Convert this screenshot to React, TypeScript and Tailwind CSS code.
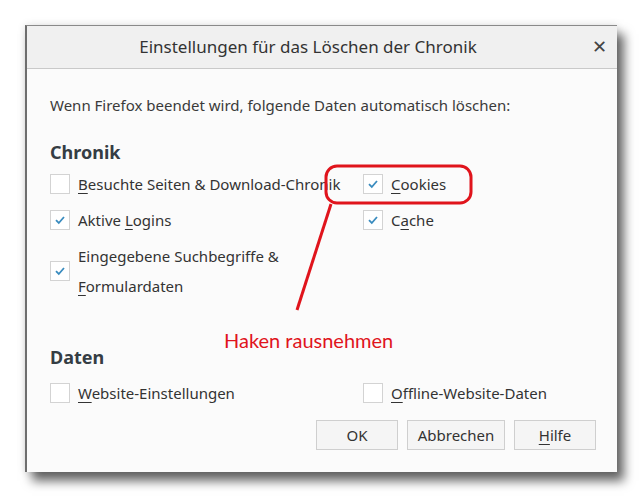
import React from "react";

type Item = { label: string; key: number; checked: boolean };

const Check = ({ checked }: { checked: boolean }) => (
  <span className="flex h-[20px] w-[20px] shrink-0 items-center justify-center border border-[#d3d3d3] bg-white">
    {checked && (
      <svg width="12" height="12" viewBox="0 0 12 12">
        <path d="M2 6.2 L4.8 9 L10 3" fill="none" stroke="#3a8cbf" strokeWidth="1.8" />
      </svg>
    )}
  </span>
);

// label with underlined access key
const Label = ({ text, k }: { text: string; k: number }) => (
  <>
    {text.slice(0, k)}
    <span className="underline underline-offset-[3px]">{text[k]}</span>
    {text.slice(k + 1)}
  </>
);

const Row = ({ item }: { item: Item }) => (
  <div className="flex h-[36px] items-center gap-[8px]">
    <Check checked={item.checked} />
    <span>
      <Label text={item.label} k={item.key} />
    </span>
  </div>
);

export default function App() {
  return (
    <div className="relative h-[497px] w-[642px] bg-white pl-[25px] pt-[25px] font-['Noto_Sans',sans-serif] text-[15px] text-[#333]">
      <div className="relative flex h-[447px] w-[592px] flex-col border-l-2 border-t border-l-[#6e6e6e] border-t-[#8a8a8a] bg-[#fbfbfb] shadow-[7px_9px_10px_rgba(0,0,0,0.6),0_0_8px_rgba(0,0,0,0.12)]">
        <div className="relative flex h-[43px] items-center justify-center border-b border-[#c9c9c9] bg-[#f0f0f0] pr-[28px] text-[17px] text-[#333]">
          Einstellungen für das Löschen der Chronik
          <span className="absolute right-[10px] top-[10px] text-[18px] leading-[20px] text-[#444]">✕</span>
        </div>

        <div className="flex flex-1 flex-col px-[23px]">
          <p className="mt-[24px] leading-[24px] text-[#3a3a3a]">Wenn Firefox beendet wird, folgende Daten automatisch löschen:</p>

          <h2 className="mt-[23px] text-[18px] font-bold leading-[24px] text-[#353d44]">Chronik</h2>
          <div className="mt-[2px] grid grid-cols-[313px_1fr]">
            <div className="flex flex-col">
              <Row item={{ label: "Besuchte Seiten & Download-Chronik", key: 0, checked: false }} />
              <Row item={{ label: "Aktive Logins", key: 7, checked: true }} />
              <div className="mt-[3px] flex items-center gap-[8px] leading-[30px]">
                <Check checked />
                <span>
                  Eingegebene Suchbegriffe &amp;
                  <br />
                  <Label text="Formulardaten" k={0} />
                </span>
              </div>
            </div>
            <div className="flex flex-col">
              <Row item={{ label: "Cookies", key: 0, checked: true }} />
              <Row item={{ label: "Cache", key: 1, checked: true }} />
            </div>
          </div>

          <h2 className="mt-[44px] text-[18px] font-bold leading-[24px] text-[#353d44]">Daten</h2>
          <div className="mt-[6px] grid grid-cols-[313px_1fr]">
            <Row item={{ label: "Website-Einstellungen", key: 0, checked: false }} />
            <Row item={{ label: "Offline-Website-Daten", key: 0, checked: false }} />
          </div>

          <div className="-mr-[2px] mt-[9px] flex justify-end gap-[9px]">
            <button className="h-[30px] w-[82px] border border-[#cfcfcf] bg-[#f5f5f5]">OK</button>
            <button className="h-[30px] w-[98px] border border-[#cfcfcf] bg-[#f5f5f5]">Abbrechen</button>
            <button className="h-[30px] w-[82px] border border-[#cfcfcf] bg-[#f5f5f5]">
              <Label text="Hilfe" k={0} />
            </button>
          </div>
        </div>

        <span className="absolute left-[197px] top-[302px] font-['Lato',sans-serif] text-[20px] leading-[24px] text-[#e0141c]">Haken rausnehmen</span>
      </div>

      <svg className="pointer-events-none absolute left-0 top-0" width="642" height="497">
        <rect x="326" y="166" width="145" height="37" rx="11" fill="none" stroke="#e0141c" strokeWidth="3" />
        <line x1="331" y1="204" x2="297" y2="310" stroke="#e0141c" strokeWidth="3" />
      </svg>
    </div>
  );
}
